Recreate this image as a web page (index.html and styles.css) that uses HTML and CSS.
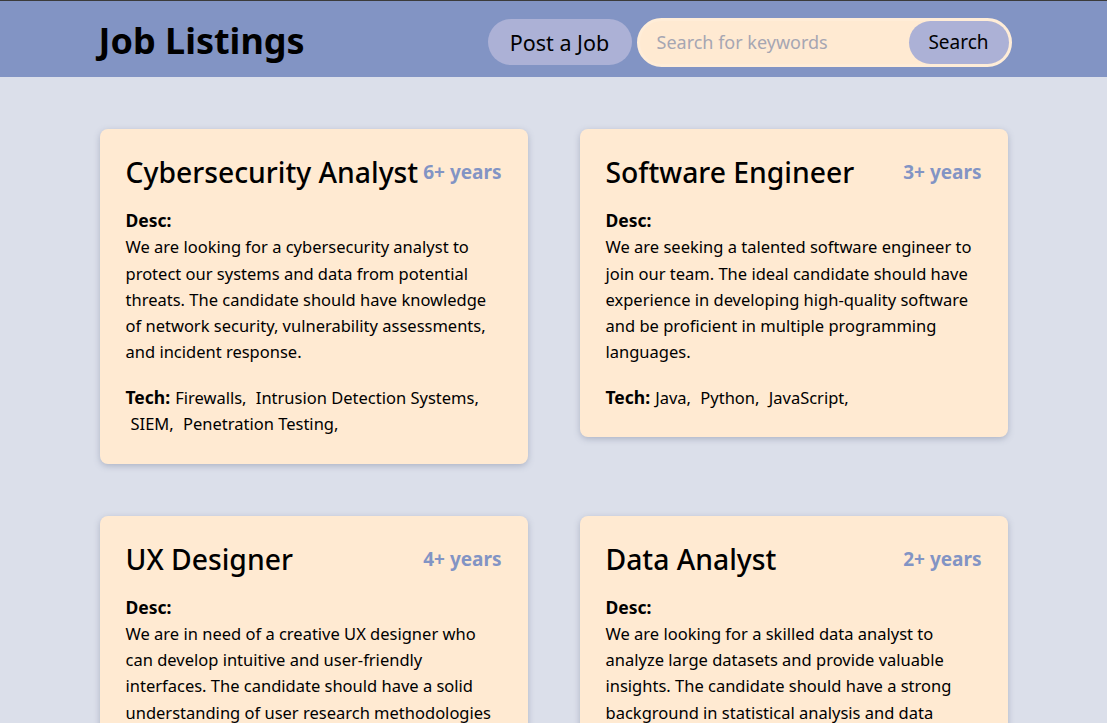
FILE: index.html
```html
<!DOCTYPE html>
<html lang="en">
<head>
<meta charset="utf-8">
<title>Job Listings</title>
<link rel="stylesheet" href="styles.css">
</head>
<body>
<header class="topbar">
  <div class="topbar-inner">
    <h1 class="brand">Job Listings</h1>
    <nav class="actions">
      <button class="pill-btn post-btn" type="button">Post a Job</button>
      <form class="search">
        <input class="search-input" type="text" placeholder="Search for keywords">
        <button class="pill-btn search-btn" type="button">Search</button>
      </form>
    </nav>
  </div>
</header>
<main class="listings">
  <article class="card">
    <div class="card-head">
      <h2 class="card-title">Cybersecurity Analyst</h2>
      <span class="years">6+ years</span>
    </div>
    <p class="desc"><strong class="label">Desc:</strong>We are looking for a cybersecurity analyst to<br>protect our systems and data from potential<br>threats. The candidate should have knowledge<br>of network security, vulnerability assessments,<br>and incident response.</p>
    <p class="tech"><strong class="tech-label">Tech:</strong><span class="tag">Firewalls,</span> <span class="tag">Intrusion Detection Systems,</span> <span class="tag">SIEM,</span> <span class="tag">Penetration Testing,</span></p>
  </article>
  <article class="card">
    <div class="card-head">
      <h2 class="card-title">Software Engineer</h2>
      <span class="years">3+ years</span>
    </div>
    <p class="desc"><strong class="label">Desc:</strong>We are seeking a talented software engineer to<br>join our team. The ideal candidate should have<br>experience in developing high-quality software<br>and be proficient in multiple programming<br>languages.</p>
    <p class="tech"><strong class="tech-label">Tech:</strong><span class="tag">Java,</span> <span class="tag">Python,</span> <span class="tag">JavaScript,</span></p>
  </article>
  <article class="card">
    <div class="card-head">
      <h2 class="card-title">UX Designer</h2>
      <span class="years">4+ years</span>
    </div>
    <p class="desc"><strong class="label">Desc:</strong>We are in need of a creative UX designer who<br>can develop intuitive and user-friendly<br>interfaces. The candidate should have a solid<br>understanding of user research methodologies<br>and usability testing.</p>
    <p class="tech"><strong class="tech-label">Tech:</strong><span class="tag">Figma,</span> <span class="tag">Sketch,</span> <span class="tag">Adobe XD,</span></p>
  </article>
  <article class="card">
    <div class="card-head">
      <h2 class="card-title">Data Analyst</h2>
      <span class="years">2+ years</span>
    </div>
    <p class="desc"><strong class="label">Desc:</strong>We are looking for a skilled data analyst to<br>analyze large datasets and provide valuable<br>insights. The candidate should have a strong<br>background in statistical analysis and data<br>visualization.</p>
    <p class="tech"><strong class="tech-label">Tech:</strong><span class="tag">SQL,</span> <span class="tag">Python,</span> <span class="tag">Tableau,</span></p>
  </article>
</main>
</body>
</html>
```
FILE: styles.css
```css
* { box-sizing: border-box; }
html, body { margin: 0; padding: 0; }
body {
  background: #DBDFEA;
  font-family: "Noto Sans", "Open Sans", sans-serif;
  color: #000;
}
.topbar {
  background: #8294C4;
  border-top: 1px solid #3b3b3b;
  height: 77px;
}
.topbar-inner {
  max-width: 916px;
  height: 100%;
  margin: 0 auto;
  display: flex;
  align-items: center;
  justify-content: space-between;
}
.brand {
  margin: 4px 0 0 3px;
  font-size: 36px;
  font-weight: 700;
  line-height: 1;
}
.actions {
  display: flex;
  align-items: center;
  gap: 5px;
  padding-top: 6px;
}
.pill-btn {
  font-family: inherit;
  background: #ACB1D6;
  border: none;
  border-radius: 999px;
  font-size: 19px;
  color: #000;
  height: 46px;
  padding: 0 20px;
  cursor: pointer;
}
.post-btn {
  font-size: 21.5px;
  padding: 0 20px;
  width: 144px;
}
.search {
  display: flex;
  align-items: center;
  background: #FFEAD2;
  border: 3px solid #FFEDD8;
  border-radius: 999px;
  height: 49px;
  width: 375px;
  margin: 0;
}
.search-input {
  flex: 1;
  min-width: 0;
  border: none;
  background: transparent;
  font-family: inherit;
  font-size: 18px;
  padding: 0 0 0 17px;
  outline: none;
  color: #000;
}
.search-input::placeholder { color: #a6a6b2; }
.search-btn {
  height: 43px;
  width: 100px;
  padding: 0;
}
.listings {
  max-width: 908px;
  margin: 0 auto;
  padding: 52px 0 40px;
  display: grid;
  grid-template-columns: 428px 428px;
  column-gap: 52px;
  row-gap: 52px;
  align-items: start;
}
.card {
  background: #FFEAD2;
  border-radius: 8px;
  padding: 22px 26px 26px;
  box-shadow: 0 2px 6px rgba(90, 100, 130, 0.35);
}
.card-head {
  display: flex;
  justify-content: space-between;
  align-items: center;
  gap: 4px;
}
.card-title {
  margin: 0;
  font-size: 28.3px;
  font-weight: 500;
  line-height: 42px;
  white-space: nowrap;
}
.years {
  color: #8294C4;
  font-weight: 700;
  font-size: 19px;
  white-space: nowrap;
}
.desc {
  margin: 14px 0 0;
  font-size: 16.5px;
  line-height: 26.25px;
}
.label {
  display: block;
  font-size: 17.5px;
  font-weight: 700;
  margin-bottom: 1px;
}
.tech {
  margin: 18px 0 0;
  font-size: 16.5px;
  line-height: 26.5px;
}
.tech-label {
  font-size: 17.5px;
  font-weight: 700;
}
.tag {
  display: inline-block;
  margin-left: 5px;
}
```
